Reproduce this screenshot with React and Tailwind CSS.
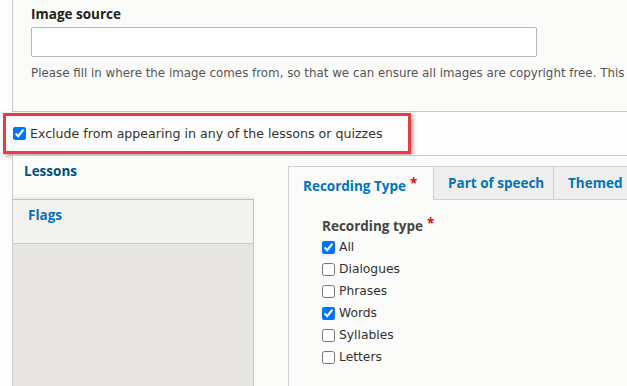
const recordingTypes = [
  { label: "All", checked: true },
  { label: "Dialogues", checked: false },
  { label: "Phrases", checked: false },
  { label: "Words", checked: true },
  { label: "Syllables", checked: false },
  { label: "Letters", checked: false },
];

const Box = ({ checked }) => (
  <input
    type="checkbox"
    defaultChecked={checked}
    className="w-[13px] h-[13px] m-0 shrink-0 accent-[#0075ff]"
  />
);

// bold headings render closer to the reference in Open Sans
const bold = { fontFamily: '"Open Sans", "DejaVu Sans", sans-serif' };

export default function App() {
  return (
    <div
      className="w-[627px] h-[386px] overflow-hidden bg-[#fefefe] text-[#333]"
      style={{ fontFamily: '"DejaVu Sans", Verdana, sans-serif' }}
    >
      {/* image source fieldset, top cut off */}
      <div className="ml-[12px] h-[112px] border-l border-b border-[#c9c9c9] bg-[#fbfbfa] pl-[18px] pt-[6px] overflow-hidden">
        <div className="text-[13.5px] leading-[17px] font-bold text-[#222]" style={bold}>
          Image source
        </div>
        <div className="mt-[4px] w-[506px] h-[30px] border border-[#b8b8b8] rounded-[2px] bg-white"></div>
        <div className="mt-[9px] whitespace-nowrap text-[11.85px] leading-[15px] text-[#555]">
          Please fill in where the image comes from, so that we can ensure all images are copyright free. This
        </div>
      </div>

      {/* highlighted checkbox */}
      <div className="ml-[3px] mt-[1px] w-[408px] h-[41px] border-[3px] border-[#ec3b43] shadow-[2px_2px_4px_rgba(0,0,0,0.35)] flex items-center gap-[4px] pl-[7px]">
        <Box checked />
        <span className="text-[12.6px] leading-[16px] text-[#333] whitespace-nowrap">
          Exclude from appearing in any of the lessons or quizzes
        </span>
      </div>

      {/* vertical tabs */}
      <div className="ml-[12px] mt-[1px] flex border-t border-l border-[#c9c9c9] h-[240px]">
        <div className="w-[241px] shrink-0 flex flex-col" style={bold}>
          <div className="h-[43px] bg-[#fbfbfa] pl-[11px] pt-[7px] text-[13.5px] leading-[17px] font-bold text-[#004f80]">
            Lessons
          </div>
          <div className="h-[44px] bg-[#f2f2f0] border-t border-r border-[#bfbfbf] shadow-[0_-2px_3px_rgba(0,0,0,0.08)] pl-[15px] pt-[7px] text-[13.5px] leading-[17px] font-bold text-[#0074bd]">
            Flags
          </div>
          <div className="flex-1 bg-[#e6e5e1] border-t border-r border-[#c9c9c9]"></div>
        </div>

        <div className="flex-1 bg-[#fbfbfa] pl-[34px] pt-[10px]">
          <div className="h-full border-l border-t border-[#cfcfcf]">
            <div className="flex h-[33px] bg-[#eeeeee] text-[13.5px] leading-[17px] font-bold text-[#0074bd]" style={bold}>
              <div className="w-[144px] bg-[#fbfbfa] pl-[14px] pt-[8px] whitespace-nowrap">
                Recording Type<span className="text-[#e00] ml-[4px] align-[3px]">*</span>
              </div>
              <div className="w-[120px] border-l border-b border-[#cfcfcf] pl-[14px] pt-[8px] whitespace-nowrap">
                Part of speech
              </div>
              <div className="flex-1 border-l border-b border-[#cfcfcf] pl-[14px] pt-[8px] whitespace-nowrap">
                Themed
              </div>
            </div>
            <div className="pl-[33px] pt-[15px]">
              <div className="text-[13.5px] leading-[17px] font-bold text-[#444] whitespace-nowrap" style={bold}>
                Recording type<span className="text-[#e00] ml-[4px] align-[3px]">*</span>
              </div>
              <div className="mt-[1px] flex flex-col">
                {recordingTypes.map((item) => (
                  <label key={item.label} className="h-[22px] flex items-center gap-[4px]">
                    <Box checked={item.checked} />
                    <span className="text-[12.3px] leading-[16px] text-[#333]">{item.label}</span>
                  </label>
                ))}
              </div>
            </div>
          </div>
        </div>
      </div>
    </div>
  );
}
